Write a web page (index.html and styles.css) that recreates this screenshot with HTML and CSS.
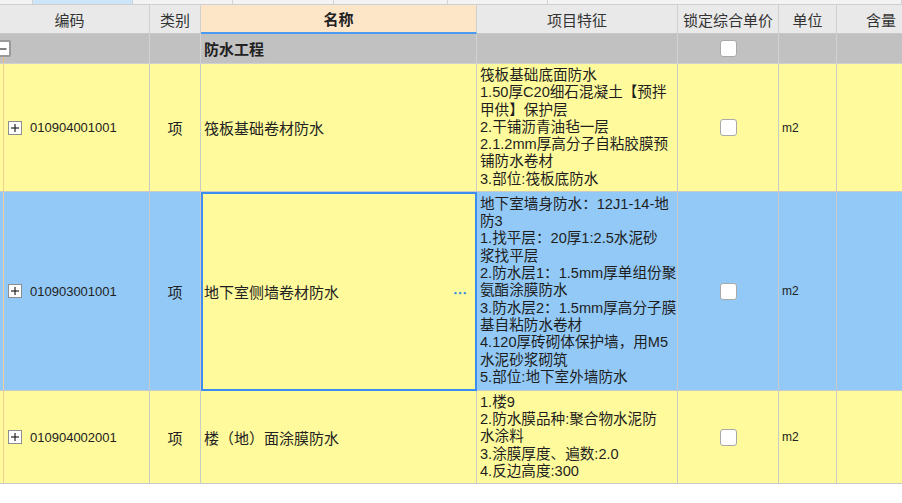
FILE: index.html
```html
<!DOCTYPE html>
<html lang="zh">
<head>
<meta charset="utf-8">
<title>防水工程</title>
<link rel="stylesheet" href="styles.css">
</head>
<body>
<div class="tabs">
  <div class="tab"></div>
  <div class="tab active"></div>
  <div class="tab"></div>
  <div class="tab"></div>
  <div class="tab"></div>
  <div class="tab"></div>
  <div class="tab"></div>
</div>
<div class="grid">
  <div class="c h">编码</div>
  <div class="c h">类别</div>
  <div class="c h hname">名称</div>
  <div class="c h">项目特征</div>
  <div class="c h">锁定综合单价</div>
  <div class="c h">单位</div>
  <div class="c h">含量</div>

  <div class="c g gcode"><span class="tog minus"><svg width="15" height="16" viewBox="0 0 15 16"><line x1="2" y1="8" x2="11" y2="8" stroke="#222" stroke-width="1.3"/></svg></span></div>
  <div class="c g"></div>
  <div class="c g gname">防水工程</div>
  <div class="c g"></div>
  <div class="c g center"><span class="chk"></span></div>
  <div class="c g"></div>
  <div class="c g"></div>

  <div class="c y code"><span class="tog"><svg width="14" height="14" viewBox="0 0 14 14"><line x1="3" y1="7" x2="11" y2="7" stroke="#222" stroke-width="1.2"/><line x1="7" y1="3" x2="7" y2="11" stroke="#222" stroke-width="1.2"/></svg></span>010904001001</div>
  <div class="c y center kind">项</div>
  <div class="c y name">筏板基础卷材防水</div>
  <div class="c y feat"><div>筏板基础底面防水<br>1.50厚C20细石混凝土【预拌<br>甲供】保护层<br>2.干铺沥青油毡一层<br>2.1.2mm厚高分子自粘胶膜预<br>铺防水卷材<br>3.部位:筏板底防水</div></div>
  <div class="c y center"><span class="chk"></span></div>
  <div class="c y unit">m2</div>
  <div class="c y"></div>

  <div class="c b code"><span class="tog"><svg width="14" height="14" viewBox="0 0 14 14"><line x1="3" y1="7" x2="11" y2="7" stroke="#222" stroke-width="1.2"/><line x1="7" y1="3" x2="7" y2="11" stroke="#222" stroke-width="1.2"/></svg></span>010903001001</div>
  <div class="c b center kind">项</div>
  <div class="c y name sel"><span>地下室侧墙卷材防水</span><span class="more">⋯</span></div>
  <div class="c b feat"><div>地下室墙身防水：12J1-14-地<br>防3<br>1.找平层：20厚1:2.5水泥砂<br>浆找平层<br>2.防水层1：1.5mm厚单组份聚<br>氨酯涂膜防水<br>3.防水层2：1.5mm厚高分子膜<br>基自粘防水卷材<br>4.120厚砖砌体保护墙，用M5<br>水泥砂浆砌筑<br>5.部位:地下室外墙防水</div></div>
  <div class="c b center"><span class="chk"></span></div>
  <div class="c b unit">m2</div>
  <div class="c b"></div>

  <div class="c y code"><span class="tog"><svg width="14" height="14" viewBox="0 0 14 14"><line x1="3" y1="7" x2="11" y2="7" stroke="#222" stroke-width="1.2"/><line x1="7" y1="3" x2="7" y2="11" stroke="#222" stroke-width="1.2"/></svg></span>010904002001</div>
  <div class="c y center kind">项</div>
  <div class="c y name">楼（地）面涂膜防水</div>
  <div class="c y feat"><div>1.楼9<br>2.防水膜品种:聚合物水泥防<br>水涂料<br>3.涂膜厚度、遍数:2.0<br>4.反边高度:300</div></div>
  <div class="c y center"><span class="chk"></span></div>
  <div class="c y unit">m2</div>
  <div class="c y"></div>
</div>
</body>
</html>
```

FILE: styles.css
```css
html, body {
  margin: 0;
  padding: 0;
  background: #ffffff;
  overflow: hidden;
  font-family: "Noto Sans CJK SC", "Liberation Sans", sans-serif;
  color: #1c1c1c;
}

.tabs {
  display: grid;
  grid-template-columns: 33px 100px 100px 101px 114px 100px 1fr;
  height: 4px;
  background: #f3f3f3;
  border-bottom: 1px solid #cfcfcf;
}
.tab {
  border-right: 1px solid #d2d2d2;
}
.tab.active {
  background: #cde5f9;
}

.grid {
  display: grid;
  grid-template-columns: 160px 51px 276px 201px 101px 58px 89px;
  grid-template-rows: 29px 30px 128px 199px 93px;
  margin-left: -10px;
  width: 936px;
}

.c {
  box-sizing: border-box;
  border-right: 1px solid #c9c9c9;
  border-bottom: 1px solid #c9c9c9;
  display: flex;
  align-items: center;
  overflow: hidden;
  white-space: nowrap;
  font-size: 15px;
}

.h {
  background: #e9e9e9;
  justify-content: center;
  color: #333333;
  border-right-color: #d0d0d0;
}
.hname {
  background: #fde5c8;
  font-weight: bold;
  color: #222222;
  border-bottom: 2px solid #4b9bf2;
}

.g {
  background: #c1c1c1;
  border-right-color: #d2d2d2;
  border-bottom-color: #d0d0d0;
}
.gcode {
  padding-left: 6px;
  background: #c1c1c1 linear-gradient(#efbd7c, #efbd7c) no-repeat 13px 23px / 1px 100%;
}
.gname {
  font-weight: bold;
  padding-left: 3px;
  color: #222222;
}

.y { background: #fffb9c; }
.b { background: #93c9f7; }

.center { justify-content: center; }

.code {
  padding-left: 18px;
  font-family: "Liberation Sans", sans-serif;
  font-size: 13px;
  color: #222222;
  background-image: linear-gradient(#f4cf95, #f4cf95);
  background-repeat: no-repeat;
  background-position: 13px 0;
  background-size: 1px 100%;
}
.tog {
  display: inline-flex;
  box-sizing: border-box;
  width: 14px;
  height: 14px;
  border: 1px solid #8e8e8e;
  background: #ffffff;
  margin-right: 8px;
  align-items: center;
  justify-content: center;
}
.tog svg { display: block; margin: -1px; }
.tog.minus {
  width: 15px;
  height: 17px;
  margin-right: 0;
  border: 2px solid #9a9a9a;
  border-radius: 2px;
}

.kind { font-size: 15px; color: #222222; }

.name {
  padding-left: 3px;
  color: #222222;
}
.sel {
  border: 2px solid #3c8df0;
  padding-left: 1px;
  padding-right: 8px;
}
.more {
  margin-left: auto;
  color: #3d8be0;
  font-weight: bold;
  font-size: 14px;
}

.feat {
  padding: 0 2px 0 3px;
  font-family: "Liberation Sans", "Noto Sans CJK SC", sans-serif;
  font-size: 14.6px;
  line-height: 17.3px;
  color: #1e1e1e;
}

.chk {
  display: block;
  box-sizing: border-box;
  width: 17px;
  height: 17px;
  border: 1px solid #a9a9a9;
  border-radius: 3px;
  background: #ffffff;
}

.unit {
  padding-left: 3px;
  font-family: "Liberation Sans", sans-serif;
  font-size: 12px;
  color: #222222;
}
```
